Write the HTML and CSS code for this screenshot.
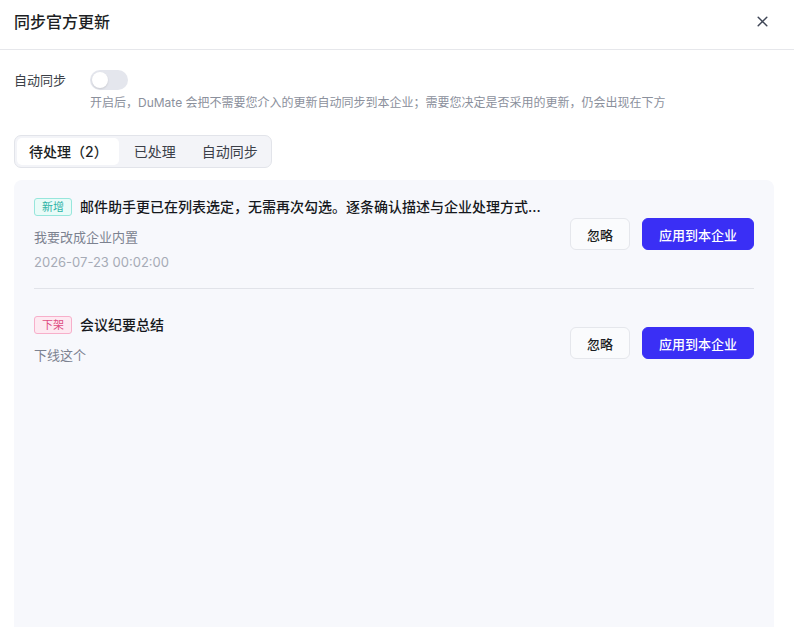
FILE: index.html
```html
<!DOCTYPE html>
<html lang="zh-CN">
<head>
<meta charset="utf-8">
<link rel="stylesheet" href="styles.css">
</head>
<body>
<div class="dialog">
  <header class="header">
    <h1 class="title">同步官方更新</h1>
    <button class="close" aria-label="关闭">
      <svg width="11" height="11" viewBox="0 0 11 11"><path d="M1.2 1.2L9.8 9.8M9.8 1.2L1.2 9.8" stroke="#3f4656" stroke-width="1.5" stroke-linecap="round"/></svg>
    </button>
  </header>
  <div class="body">
    <div class="auto-row">
      <span class="auto-label">自动同步</span>
      <div class="auto-main">
        <span class="toggle"><span class="knob"></span></span>
        <p class="hint">开启后，DuMate 会把不需要您介入的更新自动同步到本企业；需要您决定是否采用的更新，仍会出现在下方</p>
      </div>
    </div>
    <div class="tabs">
      <span class="tab active">待处理（2）</span>
      <span class="tab">已处理</span>
      <span class="tab">自动同步</span>
    </div>
    <div class="panel">
      <div class="item first">
        <div class="info">
          <div class="head"><span class="tag tag-new">新增</span><span class="name">邮件助手更已在列表选定，无需再次勾选。逐条确认描述与企业处理方式...</span></div>
          <div class="desc">我要改成企业内置</div>
          <div class="date">2026-07-23 00:02:00</div>
        </div>
        <div class="actions"><button class="btn">忽略</button><button class="btn primary">应用到本企业</button></div>
      </div>
      <div class="item second">
        <div class="info">
          <div class="head"><span class="tag tag-off">下架</span><span class="name">会议纪要总结</span></div>
          <div class="desc">下线这个</div>
        </div>
        <div class="actions"><button class="btn">忽略</button><button class="btn primary">应用到本企业</button></div>
      </div>
    </div>
  </div>
</div>
</body>
</html>
```
FILE: styles.css
```css
* { box-sizing: border-box; }
html, body { margin: 0; padding: 0; background: #fff; }
body {
  font-family: Inter, "Noto Sans CJK SC", "Noto Sans", sans-serif;
  color: #1d1f24;
  width: 794px;
  height: 627px;
  overflow: hidden;
}
.dialog { display: flex; flex-direction: column; height: 627px; }
.header {
  height: 50px;
  border-bottom: 1px solid #e6e7eb;
  display: flex;
  align-items: center;
  justify-content: space-between;
  padding: 0 25px 6px 14px;
  flex-shrink: 0;
}
.title { margin: 0; font-size: 16px; font-weight: 500; line-height: 24px; color: #1d1f24; }
.close { border: 0; background: none; padding: 0; width: 14px; height: 14px; display: flex; align-items: center; justify-content: center; cursor: pointer; }
.body { padding: 20px 20px 0 14px; display: flex; flex-direction: column; flex: 1; min-height: 0; }
.auto-row { display: flex; align-items: flex-start; }
.auto-label { width: 76px; font-size: 13px; line-height: 20px; color: #3b3f48; }
.auto-main { display: flex; flex-direction: column; }
.toggle {
  width: 38px; height: 20px; border-radius: 10px; background: #e4e6ed;
  position: relative; display: block;
}
.knob {
  position: absolute; left: 2px; top: 2px; width: 16px; height: 16px; border-radius: 50%;
  background: #fff; box-shadow: 0 1px 2px rgba(0,0,0,0.12);
}
.hint { margin: 4px 0 0; font-size: 12px; line-height: 18px; color: #8b909c; }
.tabs {
  margin-top: 23px;
  align-self: flex-start;
  display: flex;
  padding: 2px;
  background: #f3f4f8;
  border: 1px solid #e2e4ea;
  border-radius: 7px;
}
.tab { font-size: 14px; line-height: 27px; padding: 0 11px 0 15px; color: #3b3f48; border-radius: 5px; }
.tab.active { background: #fff; color: #1d1f24; font-weight: 500; padding: 0 11px 0 12px; }
.panel {
  margin-top: 12px;
  background: #f7f8fc;
  border-radius: 8px 8px 0 0;
  flex: 1;
  padding: 0 20px;
}
.item { display: flex; align-items: center; justify-content: space-between; }
.item.first { padding: 16px 0 16px; border-bottom: 1px solid #e1e3e9; }
.item.second { padding: 25px 0 16px; }
.item.second .info { padding-bottom: 7px; }
.info { display: flex; flex-direction: column; }
.head { display: flex; align-items: center; height: 22px; }
.tag {
  font-size: 11px; line-height: 16px; padding: 0 7px; border-radius: 3px; border: 1px solid; margin-right: 8px;
}
.tag-new { color: #2db3a6; background: #e9fbf8; border-color: #97e6dc; }
.tag-off { color: #de4d82; background: #fde9f1; border-color: #f7afca; }
.name { font-size: 14px; font-weight: 500; color: #16181d; line-height: 22px; }
.desc { margin-top: 9px; font-size: 13px; line-height: 20px; color: #7c8290; }
.date { margin-top: 5px; font-size: 13px; line-height: 20px; color: #a6abb6; }
.actions { display: flex; gap: 12px; }
.btn {
  font-family: inherit; font-size: 13px; font-weight: 500; height: 32px; padding: 0; width: 60px;
  border: 1px solid #e5e7ec; background: #fafbfd; color: #1d1f24; border-radius: 6px;
}
.btn.primary { width: 112px; background: #3a2ff5; border-color: #3a2ff5; color: #fff; }
```
